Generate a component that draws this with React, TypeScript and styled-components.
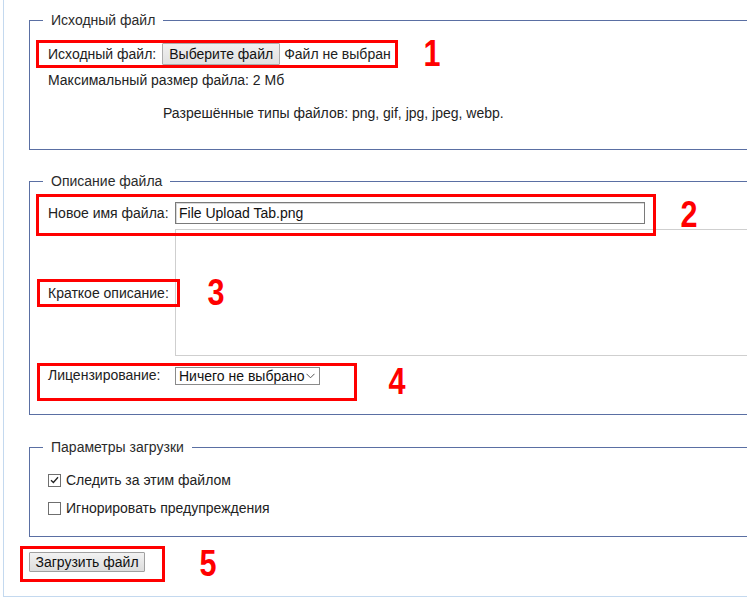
import React from "react";
import styled, { createGlobalStyle } from "styled-components";

const GlobalStyle = createGlobalStyle`
  html, body {
    margin: 0;
    padding: 0;
    background: #ffffff;
    overflow: hidden;
  }
  body {
    font-family: "Liberation Sans", Arial, sans-serif;
    font-size: 14px;
    line-height: 16px;
    color: #222222;
  }
`;

const Page = styled.div`
  margin-left: 3px;
  height: 596px;
  border-left: 1px solid #c4d9ef;
  border-bottom: 1px solid #c4d9ef;
  overflow: hidden;
`;

const Fieldset = styled.fieldset<{ $top: number; $bottom: number }>`
  margin: ${(p) => p.$top}px 0 0 25px;
  width: 780px;
  padding: 0 0 ${(p) => p.$bottom}px 0;
  border: 1px solid #5a6fa3;
  min-width: 0;
`;

const Legend = styled.legend`
  margin-left: 13px;
  padding: 0 8px;
  line-height: 16px;
  color: #2b2b2b;
`;

const Row = styled.div<{ $top?: number }>`
  display: flex;
  align-items: center;
  margin-top: ${(p) => p.$top ?? 0}px;
`;

const Mark = styled.div<{ $left: number; $pad: string; $align?: string; $width?: number }>`
  position: relative;
  z-index: 1;
  box-sizing: border-box;
  display: flex;
  flex: none;
  align-items: ${(p) => p.$align ?? "center"};
  width: ${(p) => (p.$width ? `${p.$width}px` : "auto")};
  margin-left: ${(p) => p.$left}px;
  padding: ${(p) => p.$pad};
  border: 3px solid #ff0000;
`;

const Digit = styled.span<{ $left: number }>`
  margin-left: ${(p) => p.$left}px;
  font-family: "Liberation Sans", Arial, sans-serif;
  font-weight: bold;
  font-size: 36px;
  line-height: 28px;
  color: #ff0000;
  transform: scaleX(0.85);
`;

const Label = styled.label<{ $width?: number }>`
  display: inline-block;
  flex: none;
  width: ${(p) => (p.$width ? `${p.$width}px` : "auto")};
  white-space: nowrap;
`;

const FileButton = styled.button`
  margin-left: 6px;
  height: 22px;
  padding: 0 6px;
  font-family: inherit;
  font-size: 14px;
  color: #111;
  background: linear-gradient(#f0f0f0, #e1e1e1);
  border: 1px solid #adadad;
  border-radius: 1px;
`;

const FileState = styled.span`
  margin-left: 4px;
  white-space: nowrap;
`;

const Note = styled.div<{ $top: number; $left: number }>`
  margin-top: ${(p) => p.$top}px;
  padding-left: ${(p) => p.$left}px;
  white-space: nowrap;
`;

const TextInput = styled.input`
  box-sizing: border-box;
  width: 470px;
  height: 22px;
  padding: 0 3px;
  font-family: inherit;
  font-size: 14px;
  color: #111;
  border: 1px solid #7a7a7a;
  box-shadow: inset 1px 1px 0 #d8d8d8;
  outline: none;
`;

const TextArea = styled.textarea`
  box-sizing: border-box;
  flex: none;
  width: 700px;
  height: 127px;
  margin-left: -5px;
  border: 1px solid #cfcfcf;
  resize: none;
  font-family: inherit;
`;

const DescRow = styled.div`
  position: relative;
  display: flex;
  align-items: center;
  margin-top: -7px;
`;

const FloatDigit = styled(Digit)`
  position: absolute;
  left: 176px;
  top: 50px;
  z-index: 2;
`;

const SelectWrap = styled.div`
  position: relative;
  width: 145px;
  height: 18px;
`;

const Select = styled.select`
  box-sizing: border-box;
  width: 100%;
  height: 18px;
  padding: 0 12px 0 3px;
  appearance: none;
  background: #ffffff;
  border: 1px solid #8a8a8a;
  border-radius: 0;
  font-family: inherit;
  font-size: 14px;
  line-height: 16px;
  color: #111;
`;

const Chevron = styled.svg`
  position: absolute;
  right: 5px;
  top: 6px;
  pointer-events: none;
`;

const CheckRow = styled.label`
  display: flex;
  align-items: center;
  height: 28px;
  padding-left: 18px;
`;

const Box = styled.span`
  box-sizing: border-box;
  display: inline-flex;
  align-items: center;
  justify-content: center;
  width: 13px;
  height: 13px;
  margin-right: 5px;
  border: 1px solid #6f6f6f;
  background: #ffffff;
`;

const Spacer = styled.div<{ $h: number }>`
  height: ${(p) => p.$h}px;
`;

const SubmitButton = styled.button`
  width: 116px;
  height: 20px;
  padding: 0;
  font-family: inherit;
  font-size: 14px;
  color: #111;
  background: linear-gradient(#f2f2f2, #dddddd);
  border: 1px solid #a0a0a0;
  border-radius: 1px;
`;

const CheckOption = ({ checked, children }: { checked?: boolean; children: string }) => (
  <CheckRow>
    <Box>
      {checked && (
        <svg width="9" height="8" viewBox="0 0 9 8">
          <path d="M1 4.2 L3.4 6.5 L8 1.2" fill="none" stroke="#222" strokeWidth="1.3" />
        </svg>
      )}
    </Box>
    {children}
  </CheckRow>
);

export default function App() {
  return (
    <>
      <GlobalStyle />
      <Page>
        <Fieldset $top={12} $bottom={28}>
          <Legend>Исходный файл</Legend>
          <Row $top={12}>
            <Mark $left={6} $pad="0 4px 0 9px">
              <Label>Исходный файл:</Label>
              <FileButton type="button">Выберите файл</FileButton>
              <FileState>Файл не выбран</FileState>
            </Mark>
            <Digit $left={24}>1</Digit>
          </Row>
          <Note $top={4} $left={18}>Максимальный размер файла: 2 Мб</Note>
          <Note $top={17} $left={133}>
            Разрешённые типы файлов: png, gif, jpg, jpeg, webp.
          </Note>
        </Fieldset>

        <Fieldset $top={23} $bottom={13}>
          <Legend>Описание файла</Legend>
          <Row $top={5}>
            <Mark $left={6} $pad="5px 8px 9px 9px">
              <Label $width={127}>Новое имя файла:</Label>
              <TextInput defaultValue="File Upload Tab.png" />
            </Mark>
            <Digit $left={23}>2</Digit>
          </Row>
          <DescRow>
            <Mark $left={7} $width={143} $pad="3px 0 3px 8px">
              <Label>Краткое описание:</Label>
            </Mark>
            <TextArea />
            <FloatDigit $left={0}>3</FloatDigit>
          </DescRow>
          <Row $top={7}>
            <Mark $left={7} $pad="1px 34px 13px 8px" $align="flex-start">
              <Label $width={127}>Лицензирование:</Label>
              <SelectWrap>
                <Select defaultValue="none">
                  <option value="none">Ничего не выбрано</option>
                </Select>
                <Chevron width="9" height="6" viewBox="0 0 9 6">
                  <path d="M0.5 0.8 L4.5 4.8 L8.5 0.8" fill="none" stroke="#555" strokeWidth="1" />
                </Chevron>
              </SelectWrap>
            </Mark>
            <Digit $left={30}>4</Digit>
          </Row>
        </Fieldset>

        <Fieldset $top={24} $bottom={14}>
          <Legend>Параметры загрузки</Legend>
          <Spacer $h={11} />
          <CheckOption checked>Следить за этим файлом</CheckOption>
          <CheckOption>Игнорировать предупреждения</CheckOption>
        </Fieldset>

        <Row $top={9}>
          <Mark $left={16} $pad="3px 17px 7px 6px">
            <SubmitButton type="button">Загрузить файл</SubmitButton>
          </Mark>
          <Digit $left={33}>5</Digit>
        </Row>
      </Page>
    </>
  );
}
